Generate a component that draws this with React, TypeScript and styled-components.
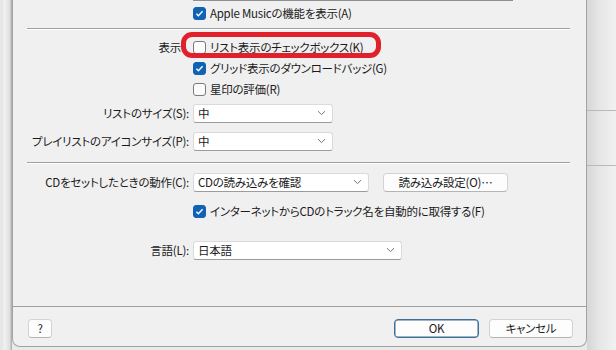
import React from "react";
import styled, { createGlobalStyle } from "styled-components";

const GlobalStyle = createGlobalStyle`
  html, body {
    margin: 0;
    padding: 0;
    background: #ececec;
  }
  body {
    font-family: "Noto Sans CJK JP", "Noto Sans", sans-serif;
    font-size: 11.5px;
    letter-spacing: -0.25px;
    color: #1b1b1b;
    font-feature-settings: "palt";
  }
`;

const Screen = styled.div`
  width: 616px;
  height: 350px;
  display: flex;
  overflow: hidden;
  background: #e9e9e9;
`;

const LeftStrip = styled.div`
  width: 12px;
  flex-shrink: 0;
  background: linear-gradient(
    to right,
    #e7e7e7 0,
    #e7e7e7 3px,
    #f3f3f3 4px,
    #dedede 10px,
    #b4b4b4 11px,
    #b4b4b4 12px
  );
`;

const RightShade = styled.div`
  flex: 1;
  display: flex;
  flex-direction: column;
  background: linear-gradient(to right, #d6d6d6 0, #e6e6e6 12px, #f1f1f1 29px);
`;

const ShadeLine = styled.div<{ $top: number }>`
  margin-top: ${(p) => p.$top}px;
  height: 1px;
  background: #b9b9b9;
`;

const Dialog = styled.div`
  width: 575px;
  height: 347px;
  flex-shrink: 0;
  box-sizing: border-box;
  display: flex;
  flex-direction: column;
  background: #f0f0f0;
  border: 1px solid #a2a2a2;
  border-top: none;
  border-radius: 0 0 8px 8px;
`;

const Body = styled.div`
  flex: 1;
  display: flex;
  flex-direction: column;
`;

const FieldTail = styled.div`
  margin-left: 180px;
  width: 320px;
  height: 1px;
  background: #8f8f8f;
`;

const Separator = styled.div<{ $mt: number }>`
  margin: ${(p) => p.$mt}px 0 0 14px;
  width: 543px;
  border-top: 1px solid #a0a0a0;
  border-bottom: 1px solid #ffffff;
`;

const FormRow = styled.div<{ $mt: number }>`
  margin-top: ${(p) => p.$mt}px;
  display: grid;
  grid-template-columns: 176px auto;
  column-gap: 4px;
  align-items: center;
`;

const Label = styled.div<{ $alignTop?: boolean; $pr?: number }>`
  text-align: right;
  white-space: nowrap;
  line-height: 20px;
  padding-right: ${(p) => p.$pr ?? 0}px;
  align-self: ${(p) => (p.$alignTop ? "start" : "center")};
`;

const Controls = styled.div`
  display: flex;
  align-items: center;
  gap: 14px;
`;

const CheckGroup = styled.div`
  display: flex;
  flex-direction: column;
  gap: 1px;
`;

const CheckRow = styled.label`
  position: relative;
  display: flex;
  align-items: center;
  gap: 4px;
  height: 20px;
  white-space: nowrap;
`;

const Box = styled.span<{ $checked: boolean }>`
  width: 13px;
  height: 13px;
  flex-shrink: 0;
  box-sizing: border-box;
  border-radius: 3px;
  display: flex;
  align-items: center;
  justify-content: center;
  background: ${(p) => (p.$checked ? "#0f62b4" : "#fbfbfb")};
  border: 1px solid ${(p) => (p.$checked ? "#0f62b4" : "#7a7a7a")};
`;

const Highlight = styled.span`
  position: absolute;
  left: -12px;
  top: -5px;
  width: 200px;
  height: 26px;
  box-sizing: border-box;
  border: 5px solid #e0202b;
  border-radius: 11px;
  pointer-events: none;
`;

const Select = styled.div<{ $w: number }>`
  width: ${(p) => p.$w}px;
  height: 19px;
  box-sizing: border-box;
  display: flex;
  align-items: center;
  justify-content: space-between;
  padding: 0 6px 0 4px;
  background: #ffffff;
  border: 1px solid #dadada;
  border-bottom-color: #9c9c9c;
  border-radius: 3px;
`;

const Button = styled.button<{ $w: number; $primary?: boolean }>`
  width: ${(p) => p.$w}px;
  height: 19px;
  padding: 0;
  box-sizing: border-box;
  font: inherit;
  color: inherit;
  letter-spacing: inherit;
  font-feature-settings: "palt";
  line-height: 17px;
  background: #fdfdfd;
  border: 1px solid ${(p) => (p.$primary ? "#3d6f97" : "#d3d3d3")};
  border-bottom-color: ${(p) => (p.$primary ? "#3d6f97" : "#b4b4b4")};
  border-radius: 4px;
  box-shadow: ${(p) => (p.$primary ? "inset 0 0 0 0.5px #3d6f97" : "none")};
`;

const Spacer = styled.div`
  flex: 1;
`;

const Footer = styled.div`
  border-top: 1px solid #a0a0a0;
  padding: 12px 13px 8px 15px;
  display: flex;
  align-items: center;
  gap: 10px;
`;

const Chevron = () => (
  <svg width="9" height="6" viewBox="0 0 9 6">
    <path d="M1 1.2l3.5 3.4L8 1.2" fill="none" stroke="#777" strokeWidth="1" />
  </svg>
);

const Check = ({ checked, children, highlight }: { checked: boolean; children: React.ReactNode; highlight?: boolean }) => (
  <CheckRow>
    <Box $checked={checked}>
      {checked && (
        <svg width="9" height="9" viewBox="0 0 9 9">
          <path d="M1.4 4.7l2 2 4.2-4.4" fill="none" stroke="#fff" strokeWidth="1.4" />
        </svg>
      )}
    </Box>
    <span>{children}</span>
    {highlight && <Highlight />}
  </CheckRow>
);

const Combo = ({ w, value }: { w: number; value: string }) => (
  <Select $w={w}>
    <span>{value}</span>
    <Chevron />
  </Select>
);

export default function App() {
  return (
    <>
      <GlobalStyle />
      <Screen>
        <LeftStrip />
        <Dialog>
          <Body>
            <FieldTail />
            <FormRow $mt={2}>
              <span />
              <CheckGroup>
                <Check checked>Apple Musicの機能を表示(A)</Check>
              </CheckGroup>
            </FormRow>
            <Separator $mt={5} />
            <FormRow $mt={7}>
              <Label $alignTop $pr={8}>
                表示
              </Label>
              <CheckGroup>
                <Check checked={false} highlight>
                  リスト表示のチェックボックス(K)
                </Check>
                <Check checked>グリッド表示のダウンロードバッジ(G)</Check>
                <Check checked={false}>星印の評価(R)</Check>
              </CheckGroup>
            </FormRow>
            <FormRow $mt={4}>
              <Label>リストのサイズ(S):</Label>
              <Combo w={140} value="中" />
            </FormRow>
            <FormRow $mt={8}>
              <Label>プレイリストのアイコンサイズ(P):</Label>
              <Combo w={140} value="中" />
            </FormRow>
            <Separator $mt={11} />
            <FormRow $mt={8}>
              <Label>CDをセットしたときの動作(C):</Label>
              <Controls>
                <Combo w={176} value="CDの読み込みを確認" />
                <Button $w={125}>読み込み設定(O)…</Button>
              </Controls>
            </FormRow>
            <FormRow $mt={9}>
              <span />
              <CheckGroup>
                <Check checked>インターネットからCDのトラック名を自動的に取得する(F)</Check>
              </CheckGroup>
            </FormRow>
            <FormRow $mt={19}>
              <Label>言語(L):</Label>
              <Combo w={209} value="日本語" />
            </FormRow>
            <Spacer />
          </Body>
          <Footer>
            <Button $w={24}>?</Button>
            <Spacer />
            <Button $w={85} $primary>
              OK
            </Button>
            <Button $w={84}>キャンセル</Button>
          </Footer>
        </Dialog>
        <RightShade>
          <ShadeLine $top={110} />
          <ShadeLine $top={54} />
        </RightShade>
      </Screen>
    </>
  );
}
